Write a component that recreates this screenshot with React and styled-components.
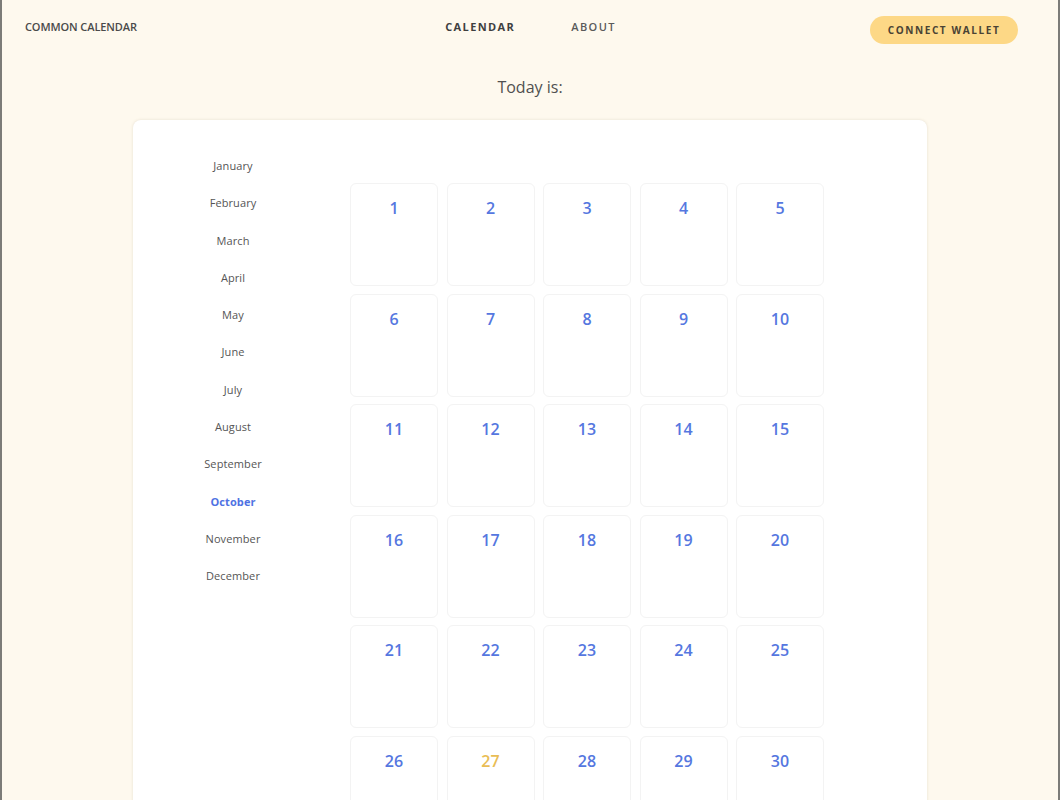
import React from 'react';
import styled, { createGlobalStyle } from 'styled-components';

const months = [
  'January', 'February', 'March', 'April', 'May', 'June',
  'July', 'August', 'September', 'October', 'November', 'December',
];

const days = Array.from({ length: 30 }, (_, i) => i + 1);

export default function App() {
  return (
    <Page>
      <GlobalStyle />
      <NavBar>
        <Brand>COMMON CALENDAR</Brand>
        <Links>
          <NavLink active>CALENDAR</NavLink>
          <NavLink>ABOUT</NavLink>
        </Links>
        <WalletButton>CONNECT WALLET</WalletButton>
      </NavBar>

      <Today>Today is:</Today>

      <Card>
        <MonthList>
          {months.map(m => (
            <Month key={m} selected={m === 'October'}>{m}</Month>
          ))}
        </MonthList>
        <DayGrid>
          {days.map(d => (
            <DayCell key={d}>
              <DayNumber today={d === 27}>{d}</DayNumber>
            </DayCell>
          ))}
        </DayGrid>
      </Card>
    </Page>
  );
}

const GlobalStyle = createGlobalStyle`
  html, body {
    margin: 0;
    padding: 0;
    background: #fef9ee;
    font-family: "Open Sans", "Liberation Sans", sans-serif;
  }
`

const Page = styled.div`
  min-height: 800px;
  box-sizing: border-box;
  border-left: 2px solid #7c7c78;
  border-right: 2px solid #7c7c78;
  background: #fef9ee;
  overflow: hidden;
`

const NavBar = styled.div`
  display: grid;
  grid-template-columns: 1fr auto 1fr;
  align-items: center;
  height: 56px;
  padding: 0 40px 0 23px;
`

const Brand = styled.div`
  font-size: 11px;
  font-weight: 600;
  color: #4a4a4a;
  letter-spacing: -0.1px;
  margin-top: -3px;
`

const Links = styled.div`
  display: flex;
  gap: 56px;
  margin-left: 18px;
  margin-top: -3px;
`

const NavLink = styled.div`
  font-family: "Open Sans", sans-serif;
  font-size: 11px;
  font-weight: ${p => (p.active ? 700 : 600)};
  letter-spacing: 1.4px;
  color: ${p => (p.active ? '#3f3f3f' : '#5a5a5a')};
`

const WalletButton = styled.div`
  justify-self: end;
  display: flex;
  align-items: center;
  justify-content: center;
  width: 148px;
  height: 28px;
  margin-top: 3px;
  border-radius: 14px;
  background: #fdd886;
  font-size: 10px;
  font-weight: 700;
  letter-spacing: 1.6px;
  color: #4a4334;
`

const Today = styled.div`
  text-align: center;
  font-size: 16px;
  color: #505050;
  margin: 20px 0 0 0;
  height: 44px;
`

const Card = styled.div`
  display: flex;
  width: 794px;
  margin: 0 0 0 131px;
  min-height: 720px;
  box-sizing: border-box;
  background: #ffffff;
  border-radius: 8px;
  box-shadow: 0 0 3px rgba(200, 190, 170, 0.45);
  padding: 38px 0 0 0;
`

const MonthList = styled.div`
  width: 200px;
  display: flex;
  flex-direction: column;
  align-items: center;
`

const Month = styled.div`
  height: 37.3px;
  font-size: 11px;
  font-weight: ${p => (p.selected ? 700 : 400)};
  color: ${p => (p.selected ? '#4f72e3' : '#555555')};
  letter-spacing: 0.1px;
`

const DayGrid = styled.div`
  display: grid;
  grid-template-columns: repeat(5, 88px);
  grid-auto-rows: 103px;
  column-gap: 8.5px;
  row-gap: 7.5px;
  margin: 25px 0 0 17px;
  align-content: start;
`

const DayCell = styled.div`
  border: 1px solid #f3f3f3;
  border-radius: 6px;
  display: flex;
  justify-content: center;
  padding-top: 13px;
  box-sizing: border-box;
`

const DayNumber = styled.div`
  font-size: 16px;
  font-weight: 600;
  color: ${p => (p.today ? '#e9bd55' : '#5577e0')};
`
